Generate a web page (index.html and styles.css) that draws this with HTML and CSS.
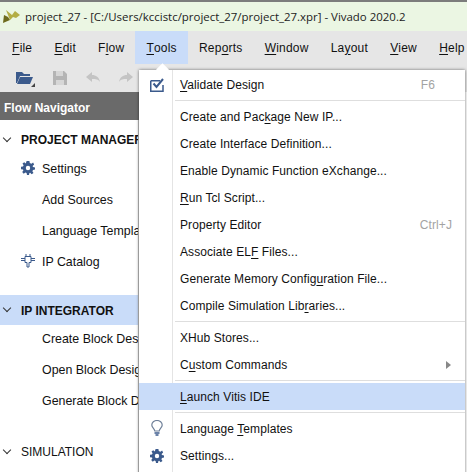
FILE: index.html
```html
<!DOCTYPE html>
<html lang="en">
<head>
    <meta charset="UTF-8" />
    <title>project_27 - Vivado 2020.2</title>
    <link rel="stylesheet" href="styles.css">
</head>
<body>
    <div class="titlebar">
        <svg class="logo" width="17" height="14" viewBox="0 0 17 14">
            <path d="M3 0 L9 5 L12 1 L17 5 L13 8 L10 7 L7 10 Z" fill="#b3ad45"/>
            <path d="M0 13 L1 5 L5 7 L7 10 Z" fill="#6d6a1c"/>
        </svg>
        <span>project_27 - [C:/Users/kccistc/project_27/project_27.xpr] - Vivado 2020.2</span>
    </div>

    <div class="menubar">
        <span class="top_item"><u>F</u>ile</span>
        <span class="top_item"><u>E</u>dit</span>
        <span class="top_item">F<u>l</u>ow</span>
        <span class="top_item active"><u>T</u>ools</span>
        <span class="top_item">Rep<u>o</u>rts</span>
        <span class="top_item"><u>W</u>indow</span>
        <span class="top_item">La<u>y</u>out</span>
        <span class="top_item"><u>V</u>iew</span>
        <span class="top_item"><u>H</u>elp</span>
    </div>

    <div class="toolbar">
        <svg class="tool_icon" width="20" height="18" viewBox="0 0 20 18">
            <path d="M1 3 H7 L9 5 H15 V7 H5 L2 14 H1 Z" fill="#3b5a8c"/>
            <path d="M5 8 H18 L15 15 H2 Z" fill="#3b5a8c"/>
            <path d="M16 18 L20 18 L20 14 Z" fill="#444"/>
        </svg>
        <svg class="tool_icon" width="16" height="16" viewBox="0 0 16 16">
            <path d="M1 1 H12 L15 4 V15 H1 Z" fill="#b4b4b4"/>
            <path d="M4 1 H11 V6 H4 Z M4 10 H12 V15 H4 Z" fill="#d6d6d6"/>
        </svg>
        <svg class="tool_icon" width="16" height="12" viewBox="0 0 16 12">
            <path d="M1 5 L7 0 V3 C11 3 14 5 15 10 C13 7 11 7 7 7 V10 Z" fill="#c4c4c4"/>
        </svg>
        <svg class="tool_icon" width="16" height="12" viewBox="0 0 16 12">
            <path d="M15 5 L9 0 V3 C5 3 2 5 1 10 C3 7 5 7 9 7 V10 Z" fill="#c4c4c4"/>
        </svg>
    </div>

    <div class="nav_header">Flow Navigator</div>

    <div class="nav">
        <div class="nav_group bold"><span class="chevron"></span>PROJECT MANAGER</div>
        <div class="nav_item">
            <svg class="nav_icon" width="14" height="14" viewBox="0 0 14 14">
                <path d="M5.6 0 H8.4 L8.8 2 L10.4 2.7 L12.1 1.6 L13.1 3.6 L11.6 4.9 L12 6 L14 6.4 V8.6 L12 9 L11.4 10.3 L12.5 12 L10.6 13.2 L9.2 11.8 L8.4 12 L8 14 H6 L5.6 12 L4.4 11.6 L2.7 12.7 L1.2 11 L2.4 9.6 L2 8.6 L0 8.2 V5.8 L2 5.4 L2.6 4.2 L1.5 2.5 L3.2 1.2 L4.8 2.4 Z M7 4.8 A2.2 2.2 0 1 0 7 9.2 A2.2 2.2 0 1 0 7 4.8 Z" fill="#3b5a8c" fill-rule="evenodd"/>
            </svg>Settings</div>
        <div class="nav_item">Add Sources</div>
        <div class="nav_item">Language Templates</div>
        <div class="nav_item">
            <svg class="nav_icon" width="14" height="14" viewBox="0 0 14 14">
                <path d="M4 2.5 H10 V8.5 H8 V13 H6 V8.5 H4 Z M0 4.5 H4 M0 6.5 H4 M10 4.5 H14 M10 6.5 H14 M5 0 V2.5 M9 0 V2.5" fill="none" stroke="#3b5a8c"/>
            </svg>IP Catalog</div>
        <div class="nav_space"></div>
        <div class="nav_group bold selected"><span class="chevron"></span>IP INTEGRATOR</div>
        <div class="nav_item">Create Block Design</div>
        <div class="nav_item">Open Block Design</div>
        <div class="nav_item">Generate Block Design</div>
        <div class="nav_space wide"></div>
        <div class="nav_group"><span class="chevron"></span>SIMULATION</div>
    </div>

    <div class="menu">
        <span class="notch"></span>
        <div class="row">
            <svg class="row_icon" width="14" height="14" viewBox="0 0 14 14">
                <path d="M0.75 2.75 H10 M13 7 V13.25 H0.75 V2.75" fill="none" stroke="#3b5a8c" stroke-width="1.5"/>
                <path d="M3.5 5.5 L6.5 9 L13 1" fill="none" stroke="#3b5a8c" stroke-width="2"/>
            </svg>
            <span class="row_label"><u>V</u>alidate Design</span><span class="shortcut f6">F6</span>
        </div>
        <div class="sep"></div>
        <div class="row"><span class="row_label">Create and Pac<u>k</u>age New IP...</span></div>
        <div class="row"><span class="row_label">Create Interface Definition...</span></div>
        <div class="row"><span class="row_label">Enable Dynamic Function eXchange...</span></div>
        <div class="row"><span class="row_label"><u>R</u>un Tcl Script...</span></div>
        <div class="row"><span class="row_label">Property Editor</span><span class="shortcut">Ctrl+J</span></div>
        <div class="row"><span class="row_label">Associate EL<u>F</u> Files...</span></div>
        <div class="row"><span class="row_label">Generate Memory Config<u>u</u>ration File...</span></div>
        <div class="row"><span class="row_label">Compile Simulation Lib<u>r</u>aries...</span></div>
        <div class="sep"></div>
        <div class="row"><span class="row_label">XHub Stores...</span></div>
        <div class="row"><span class="row_label">C<u>u</u>stom Commands</span><span class="arrow"></span></div>
        <div class="sep"></div>
        <div class="row hover"><span class="row_label"><u>L</u>aunch Vitis IDE</span></div>
        <div class="sep"></div>
        <div class="row">
            <svg class="row_icon bulb" width="12" height="16" viewBox="0 0 12 16">
                <path d="M3.8 11 C3.5 8.5 0.8 7.5 0.8 5 A5.2 4.5 0 0 1 11.2 5 C11.2 7.5 8.5 8.5 8.2 11 Z" fill="none" stroke="#6f8099" stroke-width="1.2"/>
                <path d="M3.5 13 H8.5 M4.5 15 H7.5" stroke="#3b5a8c" stroke-width="1.5"/>
            </svg>
            <span class="row_label">Language <u>T</u>emplates</span>
        </div>
        <div class="row">
            <svg class="row_icon" width="14" height="14" viewBox="0 0 14 14">
                <path d="M5.6 0 H8.4 L8.8 2 L10.4 2.7 L12.1 1.6 L13.1 3.6 L11.6 4.9 L12 6 L14 6.4 V8.6 L12 9 L11.4 10.3 L12.5 12 L10.6 13.2 L9.2 11.8 L8.4 12 L8 14 H6 L5.6 12 L4.4 11.6 L2.7 12.7 L1.2 11 L2.4 9.6 L2 8.6 L0 8.2 V5.8 L2 5.4 L2.6 4.2 L1.5 2.5 L3.2 1.2 L4.8 2.4 Z M7 4.8 A2.2 2.2 0 1 0 7 9.2 A2.2 2.2 0 1 0 7 4.8 Z" fill="#3b5a8c" fill-rule="evenodd"/>
            </svg>
            <span class="row_label">Settings...</span>
        </div>
    </div>
</body>
</html>
```

FILE: styles.css
```css
html, body {
    height: 100%;
}

body {
    margin: 0;
    overflow: hidden;
    position: relative;
    background: #fff;
    color: #111;
    font-family: "Liberation Sans", Arial, sans-serif;
    font-size: 12px;
}

u {
    text-underline-offset: 2px;
}

.titlebar {
    height: 29px;
    border-top: 2px solid #7c7c7c;
    background: #ebf6e3;
    display: flex;
    align-items: center;
    padding-left: 3px;
    gap: 5px;
    font-family: "Open Sans", sans-serif;
    font-size: 11.45px;
    color: #222;
}

.menubar {
    height: 33px;
    background: #e6e6e6;
    display: flex;
    padding-left: 1px;
    overflow: hidden;
    font-size: 12px;
    letter-spacing: 0.2px;
}

.top_item {
    flex: none;
    display: flex;
    align-items: center;
    padding: 0 11.1px;
    white-space: pre;
}

.top_item.active {
    background: #c9dcf9;
}

.toolbar {
    height: 28px;
    background: #e6e6e6;
    display: flex;
    align-items: center;
    gap: 17px;
    padding-left: 15px;
}

.tool_icon {
    flex: none;
}

.nav_header {
    height: 28px;
    width: 141px;
    background: #6a6a6a;
    color: #fff;
    font-weight: bold;
    display: flex;
    align-items: center;
    padding: 4px 0 0 4px;
    box-sizing: border-box;
}

.nav {
    width: 141px;
    height: 352px;
    box-sizing: border-box;
    padding-top: 6px;
    overflow: hidden;
    border-right: 3px solid #c4c4c4;
    white-space: nowrap;
    color: #111;
    font-size: 12.4px;
}

.nav_group {
    height: 27px;
    display: flex;
    align-items: center;
    padding-left: 21px;
    position: relative;
    font-size: 12px;
}

.nav_group.bold {
    font-weight: bold;
}

.nav_group.selected {
    height: 30px;
    box-sizing: border-box;
    padding-top: 2px;
    margin-bottom: -2px;
    background: #c9dcf9;
}

.chevron {
    position: absolute;
    left: 4px;
    top: calc(50% - 5px);
    width: 5px;
    height: 5px;
    border-right: 1.5px solid #333;
    border-bottom: 1.5px solid #333;
    transform: rotate(45deg);
}

.nav_item {
    height: 31px;
    display: flex;
    align-items: center;
    padding-left: 42px;
    position: relative;
}

.nav_icon {
    position: absolute;
    left: 21px;
    top: 8px;
}

.nav_space {
    height: 18px;
}

.nav_space.wide {
    height: 22px;
}

.menu {
    position: absolute;
    left: 139px;
    top: 70px;
    width: 326px;
    height: 420px;
    box-sizing: border-box;
    padding-top: 1px;
    background: #fff;
    box-shadow: 0 0 3px rgba(0, 0, 0, 0.55);
    font-size: 12px;
    letter-spacing: 0.08px;
}

.menu::before {
    content: "";
    position: absolute;
    left: 33px;
    top: 0;
    bottom: 0;
    border-left: 1px solid #e4e4e4;
}

.notch {
    position: absolute;
    left: 19px;
    top: -5px;
    width: 9px;
    height: 9px;
    background: #fff;
    transform: rotate(45deg);
}

.row {
    height: 27px;
    display: flex;
    align-items: center;
    padding-left: 41px;
    padding-right: 13px;
    position: relative;
}

.row.hover {
    background: #c9dcf9;
}

.row_icon {
    position: absolute;
    left: 11px;
    top: 7px;
}

.row_icon.bulb {
    left: 12px;
    top: 5px;
}

.row_label {
    flex: 1;
}

.shortcut {
    color: #a3a3a3;
}

.shortcut.f6 {
    margin-right: 17px;
}

.arrow {
    border-left: 5px solid #888;
    border-top: 4px solid transparent;
    border-bottom: 4px solid transparent;
    margin-right: 1px;
}

.sep {
    height: 1px;
    margin: 2px 0 2px 36px;
    background: #dedede;
    position: relative;
}
```
